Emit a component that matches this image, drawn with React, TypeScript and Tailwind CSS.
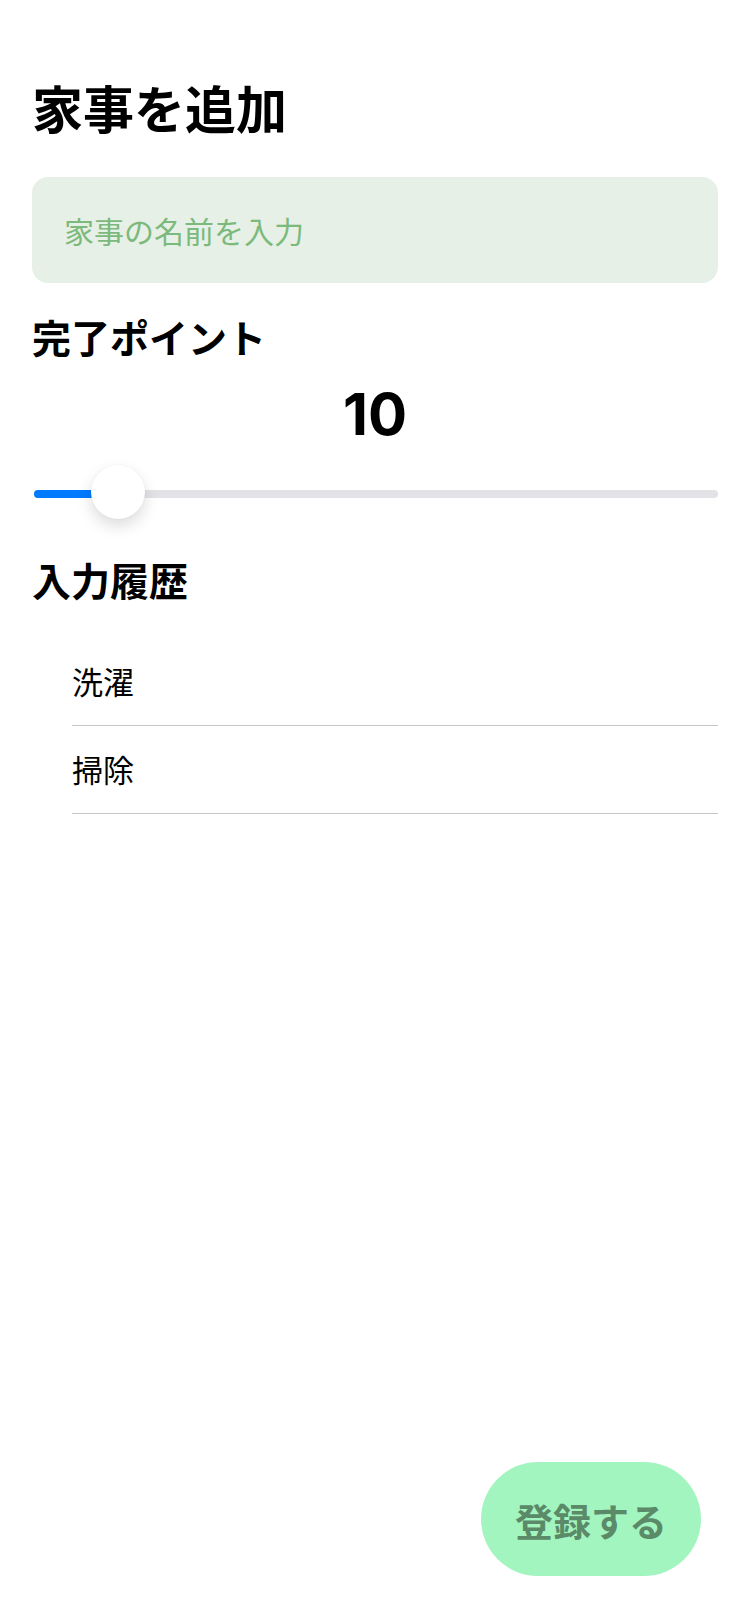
import { useState } from "react";

const MIN = 1;
const MAX = 100;

function PointSlider({ value }: { value: number }) {
  const pct = (value - MIN) / (MAX - MIN);
  return (
    <div className="relative h-[54px] w-full">
      {/* track */}
      <div className="absolute left-[2px] right-0 top-[25px] h-[8px] rounded-full bg-[#e3e3e7]" />
      <div
        className="absolute left-[2px] top-[25px] h-[8px] rounded-full bg-[#007aff]"
        style={{ width: `calc(27px + (100% - 56px) * ${pct})` }}
      />
      {/* thumb */}
      <div
        className="absolute top-0 h-[54px] w-[54px] rounded-full bg-white shadow-[0_7px_16px_rgba(0,0,0,0.14),0_0_2px_rgba(0,0,0,0.06)]"
        style={{ left: `calc(2px + (100% - 56px) * ${pct})` }}
      />
    </div>
  );
}

export default function App() {
  const [name, setName] = useState("");
  const history = ["洗濯", "掃除"];

  return (
    <div className="flex min-h-[1624px] w-[750px] flex-col bg-white px-[32px] font-['Noto_Sans_CJK_JP','Noto_Sans_CJK_SC',sans-serif] text-black">
      {/* Header */}
      <h1 className="mt-[82px] text-[51px] font-bold leading-[51px]">家事を追加</h1>

      {/* Name input */}
      <input
        value={name}
        onChange={(e) => setName(e.target.value)}
        placeholder="家事の名前を入力"
        className="mt-[44px] h-[106px] w-full rounded-[16px] bg-[#e6f0e6] px-[32px] text-[30px] outline-none placeholder:text-[#7cb97c]"
      />

      {/* Points */}
      <h2 className="mt-[34px] text-[39px] font-bold leading-[39px]">完了ポイント</h2>
      <p className="mt-[29px] text-center font-['Inter',sans-serif] text-[58px] font-bold leading-[58px]">10</p>
      <div className="mt-[22px]">
        <PointSlider value={10} />
      </div>

      {/* History */}
      <h2 className="mt-[41px] text-[39px] font-bold leading-[39px]">入力履歴</h2>
      <ul className="ml-[40px] mt-[39px]">
        {history.map((item) => (
          <li key={item} className="flex h-[88px] items-center border-b border-[#c8c8c8] text-[31px]">
            {item}
          </li>
        ))}
      </ul>

      <div className="flex-1" />

      <button className="mb-[48px] mr-[17px] flex h-[114px] w-[220px] items-center justify-center self-end rounded-[57px] bg-[#a3f5c0] text-[38px] font-bold text-[#5b8a68]">
        登録する
      </button>
    </div>
  );
}
